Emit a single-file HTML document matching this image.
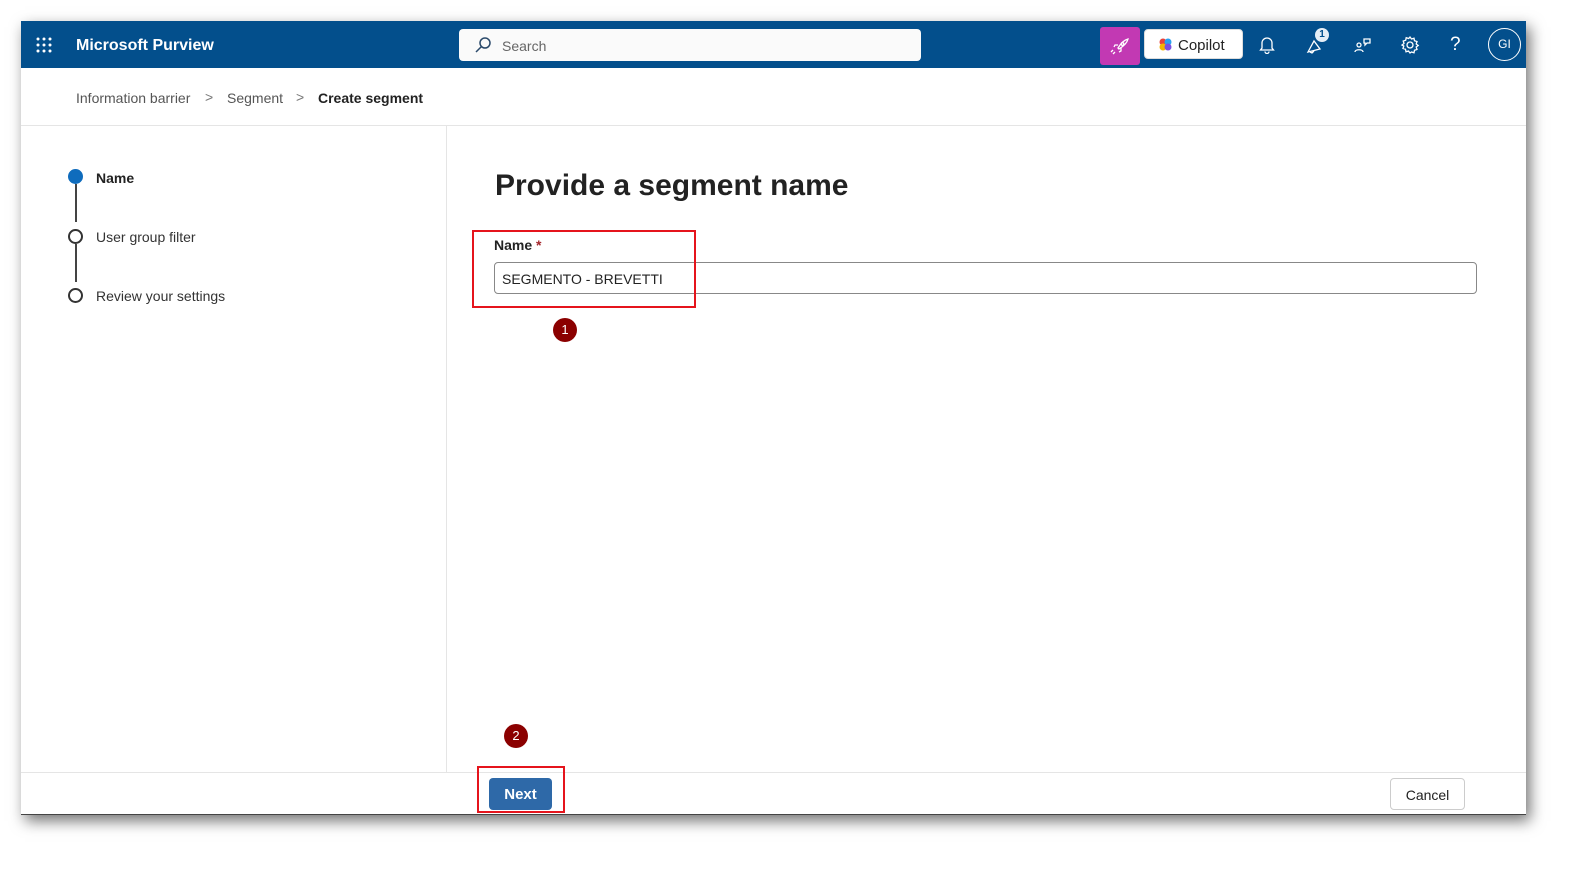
<!DOCTYPE html>
<html><head><meta charset="utf-8"><style>
*{box-sizing:border-box;margin:0;padding:0}
body{width:1589px;height:869px;background:#fff;font-family:"Segoe UI","Liberation Sans",sans-serif;position:relative;overflow:hidden}
.frame{position:absolute;left:21px;top:21px;width:1505px;height:794px;background:#fff;box-shadow:4px 6px 14px rgba(0,0,0,.55);border-bottom:1px solid #444}
.hdr{position:absolute;left:0;top:0;width:1505px;height:47px;background:#034f8c}
.abs{position:absolute}
.txt{position:absolute;white-space:nowrap}
.ico{position:absolute}
</style></head><body>
<div class="frame">
 <div class="hdr">
  <svg class="ico" style="left:15px;top:16px" width="16" height="16" viewBox="0 0 16 16" fill="#fff">
   <circle cx="2" cy="2" r="1.5"/><circle cx="8" cy="2" r="1.5"/><circle cx="14" cy="2" r="1.5"/>
   <circle cx="2" cy="8" r="1.5"/><circle cx="8" cy="8" r="1.5"/><circle cx="14" cy="8" r="1.5"/>
   <circle cx="2" cy="14" r="1.5"/><circle cx="8" cy="14" r="1.5"/><circle cx="14" cy="14" r="1.5"/></svg>
  <div class="txt" style="left:55px;top:16px;color:#fff;font-weight:bold;font-size:16px">Microsoft Purview</div>
  <div class="abs" style="left:438px;top:8px;width:462px;height:32px;background:#fafafa;border-radius:4px"></div>
  <svg class="ico" style="left:453px;top:15px" width="18" height="18" viewBox="0 0 18 18" fill="none" stroke="#2b4a6b" stroke-width="1.5"><circle cx="11" cy="7" r="5"/><path d="M7.5 10.5 2 16"/></svg>
  <div class="txt" style="left:481px;top:17px;color:#666;font-size:14px">Search</div>
  <div class="abs" style="left:1079px;top:6px;width:40px;height:38px;background:#c239b3;border-radius:3px"></div>
  <svg class="ico" style="left:1089px;top:15px" width="20" height="20" viewBox="0 0 20 20" fill="none" stroke="#fff" stroke-width="1.3"><path d="M8 12c3-5 6-8 10-9-1 4-4 7-9 10z"/><circle cx="12.5" cy="8" r="1.3"/><path d="M8 9 5 9 4 11M11 12v3l-2 1M3 14l-2 2M5 16l-2 2"/></svg>
  <div class="abs" style="left:1123px;top:8px;width:99px;height:30px;background:#fff;border-radius:4px;border:1px solid #ddd"></div>
  <svg class="ico" style="left:1138px;top:17px" width="13" height="13" viewBox="0 0 13 13"><circle cx="4" cy="4" r="3.5" fill="#e8413a"/><circle cx="9" cy="4" r="3.5" fill="#2ba0f0"/><circle cx="4" cy="9" r="3.5" fill="#f5b400"/><circle cx="9" cy="9" r="3.5" fill="#7b4fe0"/></svg>
  <div class="txt" style="left:1157px;top:16px;color:#222;font-size:15px">Copilot</div>
  <svg class="ico" style="left:1238px;top:15px" width="16" height="18" viewBox="0 0 16 18" fill="none" stroke="#fff" stroke-width="1.3"><path d="M3 12V7a5 5 0 0 1 10 0v5l1.5 2h-13z"/><path d="M6 15.5a2 2 0 0 0 4 0"/></svg>
  <svg class="ico" style="left:1284px;top:12px" width="22" height="22" viewBox="0 0 22 22" fill="none" stroke="#fff" stroke-width="1.3"><path d="M3 19 9 8l6 8z"/><path d="M5 19l2 1 2-2"/></svg>
  <div class="abs" style="left:1294px;top:7px;width:14px;height:14px;border-radius:7px;background:#e6eef6;color:#034f8c;font-size:10px;font-weight:bold;text-align:center;line-height:14px">1</div>
  <svg class="ico" style="left:1332px;top:15px" width="20" height="18" viewBox="0 0 20 18" fill="none" stroke="#fff" stroke-width="1.3"><circle cx="6" cy="9" r="2"/><path d="M2 16c0-3 8-3 8 0"/><path d="M11 3h6v4h-3l-2 2V7h-1z"/></svg>
  <svg class="ico" style="left:1379px;top:14px" width="20" height="20" viewBox="0 0 20 20" fill="none" stroke="#fff" stroke-width="1.3"><circle cx="10" cy="10" r="3"/><path d="M10 2l1.5 2 2.5-.8.5 2.5 2.5.8-.8 2.5 2 1.5-2 1.5.8 2.5-2.5.8-.5 2.5-2.5-.8L10 18l-1.5-2-2.5.8-.5-2.5-2.5-.8.8-2.5L2 10l2-1.5-.8-2.5 2.5-.8.5-2.5 2.5.8z"/></svg>
  <div class="txt" style="left:1429px;top:13px;color:#fff;font-size:19px">?</div>
  <div class="abs" style="left:1467px;top:7px;width:33px;height:33px;border-radius:50%;border:1px solid #fff;color:#fff;font-size:12px;text-align:center;line-height:31px">GI</div>
 </div>
 <div class="txt" style="left:55px;top:69px;font-size:14px;color:#555">Information barrier</div>
 <div class="txt" style="left:184px;top:68px;font-size:14px;color:#777">&gt;</div>
 <div class="txt" style="left:206px;top:69px;font-size:14px;color:#555">Segment</div>
 <div class="txt" style="left:275px;top:68px;font-size:14px;color:#777">&gt;</div>
 <div class="txt" style="left:297px;top:69px;font-size:14px;color:#222;font-weight:bold">Create segment</div>
 <div class="abs" style="left:0;top:104px;width:1505px;height:1px;background:#e5e5e5"></div>
 <div class="abs" style="left:425px;top:105px;width:1px;height:646px;background:#e5e5e5"></div>
 <div class="abs" style="left:0;top:751px;width:1505px;height:1px;background:#e5e5e5"></div>
 <div class="abs" style="left:47px;top:148px;width:15px;height:15px;border-radius:50%;background:#0f6cbd"></div>
 <div class="abs" style="left:54px;top:163px;width:2px;height:38px;background:#444"></div>
 <div class="abs" style="left:47px;top:208px;width:15px;height:15px;border-radius:50%;border:2px solid #333"></div>
 <div class="abs" style="left:54px;top:223px;width:2px;height:38px;background:#444"></div>
 <div class="abs" style="left:47px;top:267px;width:15px;height:15px;border-radius:50%;border:2px solid #333"></div>
 <div class="txt" style="left:75px;top:149px;font-size:14px;font-weight:bold;color:#222">Name</div>
 <div class="txt" style="left:75px;top:208px;font-size:14px;color:#333">User group filter</div>
 <div class="txt" style="left:75px;top:267px;font-size:14px;color:#333">Review your settings</div>
 <div class="txt" style="left:474px;top:148px;font-size:30px;font-weight:bold;color:#222">Provide a segment name</div>
 <div class="txt" style="left:473px;top:216px;font-size:14px;font-weight:bold;color:#222">Name <span style="color:#a4262c">*</span></div>
 <div class="abs" style="left:473px;top:241px;width:983px;height:32px;border:1px solid #888;border-radius:4px"></div>
 <div class="txt" style="left:481px;top:250px;font-size:14px;color:#222">SEGMENTO - BREVETTI</div>
 <div class="abs" style="left:451px;top:209px;width:224px;height:78px;border:2px solid #e5141c"></div>
 <div class="abs" style="left:532px;top:297px;width:24px;height:24px;border-radius:50%;background:#8b0000;color:#fff;font-size:13px;text-align:center;line-height:24px">1</div>
 <div class="abs" style="left:483px;top:703px;width:24px;height:24px;border-radius:50%;background:#8b0000;color:#fff;font-size:13px;text-align:center;line-height:24px">2</div>
 <div class="abs" style="left:468px;top:757px;width:63px;height:32px;background:#2e69a8;border-radius:4px;color:#fff;font-size:15px;font-weight:bold;text-align:center;line-height:34px">Next</div>
 <div class="abs" style="left:456px;top:745px;width:88px;height:47px;border:2px solid #e5141c"></div>
 <div class="abs" style="left:1369px;top:757px;width:75px;height:32px;border:1px solid #ccc;border-radius:4px;color:#222;font-size:14px;text-align:center;line-height:32px">Cancel</div>
</div>
</body></html>
